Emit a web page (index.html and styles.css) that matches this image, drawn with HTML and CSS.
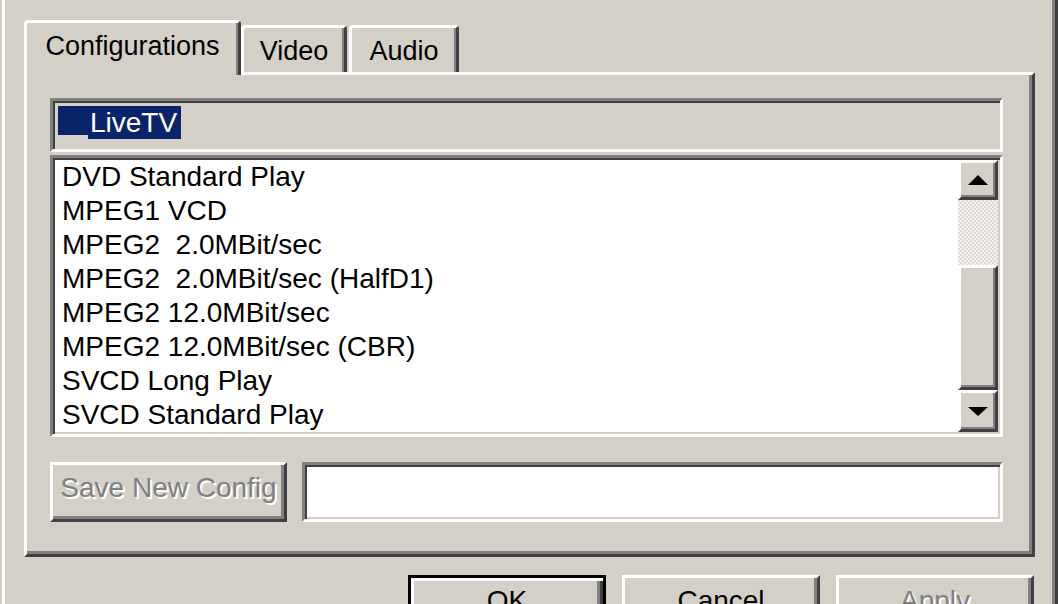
FILE: index.html
```html
<!DOCTYPE html>
<html>
<head>
<meta charset="utf-8">
<link rel="stylesheet" href="styles.css">
</head>
<body>
<div class="dialog">
  <div class="tabs">
    <div class="tab tab-active">Configurations</div>
    <div class="tab tab-video">Video</div>
    <div class="tab tab-audio">Audio</div>
  </div>
  <div class="panel">
    <div class="combo">
      <span class="sel"><span class="sel-pad"></span><span class="sel-text">LiveTV</span></span>
    </div>
    <div class="list">
      <div class="items">
        <div class="item">DVD Standard Play</div>
        <div class="item">MPEG1 VCD</div>
        <div class="item">MPEG2  2.0MBit/sec</div>
        <div class="item">MPEG2  2.0MBit/sec (HalfD1)</div>
        <div class="item">MPEG2 12.0MBit/sec</div>
        <div class="item">MPEG2 12.0MBit/sec (CBR)</div>
        <div class="item">SVCD Long Play</div>
        <div class="item">SVCD Standard Play</div>
      </div>
      <div class="scrollbar">
        <div class="sb-btn sb-up"><span class="arrow-up"></span></div>
        <div class="sb-track"></div>
        <div class="sb-thumb"></div>
        <div class="sb-btn sb-down"><span class="arrow-down"></span></div>
      </div>
    </div>
    <div class="save-row">
      <div class="btn btn-save disabled">Save New Config</div>
      <div class="edit"></div>
    </div>
  </div>
  <div class="buttons">
    <div class="btn btn-bottom btn-default">OK</div>
    <div class="btn btn-bottom">Cancel</div>
    <div class="btn btn-bottom disabled">Apply</div>
  </div>
</div>
</body>
</html>
```
FILE: styles.css
```css
html, body {
  margin: 0;
  padding: 0;
}
body {
  width: 1058px;
  height: 604px;
  overflow: hidden;
  background: #d4d0c8;
  font-family: "Liberation Sans", Arial, sans-serif;
  font-size: 28px;
  color: #000;
}
.dialog {
  box-sizing: border-box;
  margin-left: 2px;
  width: 1056px;
  height: 604px;
  overflow: hidden;
  border-left: 3px solid #fff;
  border-right: 3px solid #404040;
  box-shadow: inset -3px 0 0 #808080;
  padding: 20px 17px 0 19px;
}
.tabs {
  display: flex;
  align-items: flex-end;
  height: 55px;
  margin-bottom: -3px;
  position: relative;
  z-index: 1;
}
.tab {
  box-sizing: border-box;
  background: #d4d0c8;
  border-top: 3px solid #fff;
  border-left: 3px solid #fff;
  border-right: 3px solid #404040;
  box-shadow: inset -2px 0 0 #808080;
  border-top-left-radius: 4px;
  border-top-right-radius: 4px;
  font-size: 27px;
  line-height: 32px;
  padding-top: 7px;
  text-align: center;
}
.tab-active {
  width: 217px;
  height: 55px;
}
.tab-video {
  width: 106px;
  height: 47px;
  margin-bottom: 3px;
}
.tab-audio {
  width: 110px;
  height: 47px;
  margin-bottom: 3px;
  margin-left: 2px;
}
.panel {
  box-sizing: border-box;
  width: 1011px;
  height: 485px;
  border-top: 3px solid #fff;
  border-left: 3px solid #fff;
  border-right: 3px solid #404040;
  border-bottom: 3px solid #404040;
  box-shadow: inset -3px -3px 0 #808080;
  padding: 23px 29px 0 23px;
}
.combo {
  box-sizing: border-box;
  height: 54px;
  border: 3px solid;
  border-color: #808080 #fff #fff #808080;
  box-shadow: inset 2px 2px 0 #404040, inset -2px -2px 0 #d4d0c8;
  padding: 5px;
  display: flex;
  align-items: flex-start;
}
.sel {
  display: inline-flex;
  align-items: flex-start;
}
.sel-pad {
  width: 30px;
  height: 29px;
  background: #0a246a;
}
.sel-text {
  background: #0a246a;
  color: #fff;
  height: 33px;
  line-height: 33px;
  padding: 0 4px 0 2px;
}
.list {
  box-sizing: border-box;
  margin-top: 3px;
  height: 282px;
  border: 3px solid;
  border-color: #808080 #fff #fff #808080;
  box-shadow: inset 2px 2px 0 #404040, inset -2px -2px 0 #d4d0c8;
  background: #fff;
  padding: 2px;
  display: flex;
}
.items {
  flex: 1;
  padding-left: 7px;
}
.item {
  height: 34px;
  line-height: 34px;
  white-space: pre;
}
.scrollbar {
  width: 40px;
  display: flex;
  flex-direction: column;
}
.sb-btn, .sb-thumb {
  box-sizing: border-box;
  background: #d4d0c8;
  border-top: 3px solid #fff;
  border-left: 3px solid #fff;
  border-right: 3px solid #404040;
  border-bottom: 3px solid #404040;
  box-shadow: inset -2px -2px 0 #808080;
  display: flex;
  align-items: center;
  justify-content: center;
}
.sb-up {
  height: 40px;
}
.sb-down {
  height: 42px;
}
.sb-track {
  height: 65px;
  background: repeating-conic-gradient(#f4f3f0 0 25%, #dcd9d2 0 50%) 0 0 / 4px 4px;
}
.sb-thumb {
  height: 125px;
}
.arrow-up {
  width: 0;
  height: 0;
  border-left: 10px solid transparent;
  border-right: 10px solid transparent;
  border-bottom: 10px solid #000;
}
.arrow-down {
  width: 0;
  height: 0;
  border-left: 10px solid transparent;
  border-right: 10px solid transparent;
  border-top: 9px solid #000;
}
.save-row {
  margin-top: 25px;
  display: flex;
  gap: 15px;
  height: 60px;
}
.btn {
  box-sizing: border-box;
  height: 60px;
  background: #d4d0c8;
  border-top: 3px solid #fff;
  border-left: 3px solid #fff;
  border-right: 3px solid #404040;
  border-bottom: 3px solid #404040;
  box-shadow: inset -3px -3px 0 #808080;
  line-height: 34px;
  padding-top: 6px;
  text-align: center;
  white-space: nowrap;
}
.btn-save {
  width: 237px;
}
.disabled {
  color: #808080;
  text-shadow: 2px 2px 0 #fff;
}
.edit {
  box-sizing: border-box;
  flex: 1;
  height: 60px;
  background: #fff;
  border: 3px solid;
  border-color: #808080 #fff #fff #808080;
  box-shadow: inset 2px 2px 0 #404040, inset -2px -2px 0 #d4d0c8;
}
.buttons {
  margin-top: 18px;
  display: flex;
  justify-content: flex-end;
  gap: 16px;
  padding-right: 4px;
}
.btn-bottom {
  width: 198px;
  flex-shrink: 0;
}
.btn-default {
  border: 3px solid #000;
  box-shadow: inset 3px 3px 0 #fff, inset -3px -3px 0 #404040, inset -6px -6px 0 #808080;
}
```
